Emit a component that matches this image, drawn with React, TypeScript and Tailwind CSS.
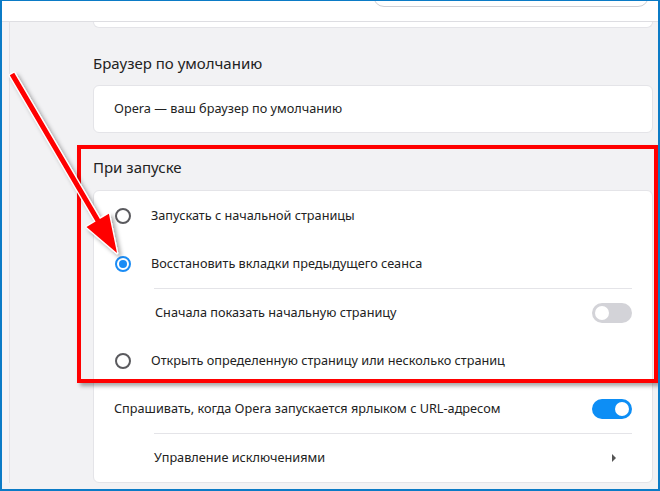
import React from "react";

const FONT = { fontFamily: '"Noto Sans", "Open Sans", sans-serif' };

function Radio({ checked }: { checked?: boolean }) {
  return checked ? (
    <span className="flex h-[16px] w-[16px] items-center justify-center rounded-full border-2 border-[#1a8cf5]">
      <span className="h-[8px] w-[8px] rounded-full bg-[#1a8cf5]" />
    </span>
  ) : (
    <span className="h-[16px] w-[16px] rounded-full border-2 border-[#5a5a5e]" />
  );
}

function Toggle({ on }: { on?: boolean }) {
  return (
    <span
      className={`flex h-[20px] w-[40px] items-center rounded-full px-[3px] ${
        on ? "justify-end bg-[#0d8ef5]" : "justify-start bg-[#d3d3d8]"
      }`}
    >
      <span className="h-[14px] w-[14px] rounded-full bg-white" />
    </span>
  );
}

function RadioRow({ label, checked }: { label: string; checked?: boolean }) {
  return (
    <div className="flex h-12 items-center pl-[21px]">
      <Radio checked={checked} />
      <span className="ml-[20px] text-[12.7px] text-[#222]">{label}</span>
    </div>
  );
}

function Arrow() {
  return (
    <svg className="pointer-events-none absolute left-0 top-0" width="660" height="491">
      <defs>
        <filter id="sh" x="-20%" y="-20%" width="140%" height="140%">
          <feDropShadow dx="3" dy="3" stdDeviation="2" floodColor="#000" floodOpacity="0.35" />
        </filter>
      </defs>
      <polygon
        points="12.2,71.7 97.9,218 106.9,212.7 115,252 84.5,225.9 93.6,220.6 7.8,74.3"
        fill="#ff0000"
        stroke="#ffffff"
        strokeWidth="2.5"
        strokeLinejoin="round"
        paintOrder="stroke"
        filter="url(#sh)"
      />
    </svg>
  );
}

export default function App() {
  return (
    <div
      className="relative h-[491px] w-[660px] overflow-hidden border-2 border-t border-[#0b7bc6] bg-[#f2f2f4]"
      style={FONT}
    >
      {/* header */}
      <div className="flex h-[21px] border-b border-[#dedee2] bg-white">
        <div className="ml-[371px] -mt-[16px] h-[22px] w-[276px] rounded-[11px] border border-[#cfcfd4] bg-white" />
      </div>

      <div className="flex">
        <div className="w-[8px] border-r border-[#e2e2e6] bg-[#f4f4f6]" />

        <div className="flex-1 pl-[83px] pr-[5px]">
          <div className="h-[6px] rounded-b-md border-x border-b border-[#e4e4e8] bg-white" />

          <h2 className="mt-[25px] h-[20px] text-[15px] leading-[20px] text-[#222]">
            Браузер по умолчанию
          </h2>
          <div className="mt-[12px] flex h-[48px] items-center rounded-md border border-[#e4e4e8] bg-white pl-[20px] text-[12.7px] text-[#222]">
            Opera — ваш браузер по умолчанию
          </div>

          <h2 className="mt-[24px] h-[20px] text-[15px] leading-[20px] text-[#222]">При запуске</h2>
          <div className="mt-[13px] rounded-md border border-[#e4e4e8] bg-white pt-[1px]">
            <RadioRow label="Запускать с начальной страницы" />
            <RadioRow label="Восстановить вкладки предыдущего сеанса" checked />
            <div className="ml-[60px] mr-[20px] border-t border-[#e4e4e8]" />
            <div className="flex h-12 items-center justify-between pl-[61px] pr-[20px]">
              <span className="text-[12.7px] text-[#222]">Сначала показать начальную страницу</span>
              <Toggle />
            </div>
            <RadioRow label="Открыть определенную страницу или несколько страниц" />
            <div className="flex h-12 items-center justify-between pl-[20px] pr-[20px]">
              <span className="text-[12.7px] text-[#222]">
                Спрашивать, когда Opera запускается ярлыком с URL-адресом
              </span>
              <Toggle on />
            </div>
            <div className="ml-[60px] mr-[20px] border-t border-[#e4e4e8]" />
            <div className="flex h-12 items-center justify-between pl-[60px] pr-[36px]">
              <span className="text-[12.7px] text-[#222]">Управление исключениями</span>
              <span className="h-0 w-0 border-y-[4px] border-l-[4px] border-y-transparent border-l-[#555]" />
            </div>
          </div>
        </div>
      </div>

      {/* annotation */}
      <div className="pointer-events-none absolute left-[75px] top-[144px] h-[238px] w-[581px] border-4 border-[#ff0000] shadow-[3px_3px_4px_rgba(0,0,0,0.35)]" />
      <Arrow />
    </div>
  );
}
